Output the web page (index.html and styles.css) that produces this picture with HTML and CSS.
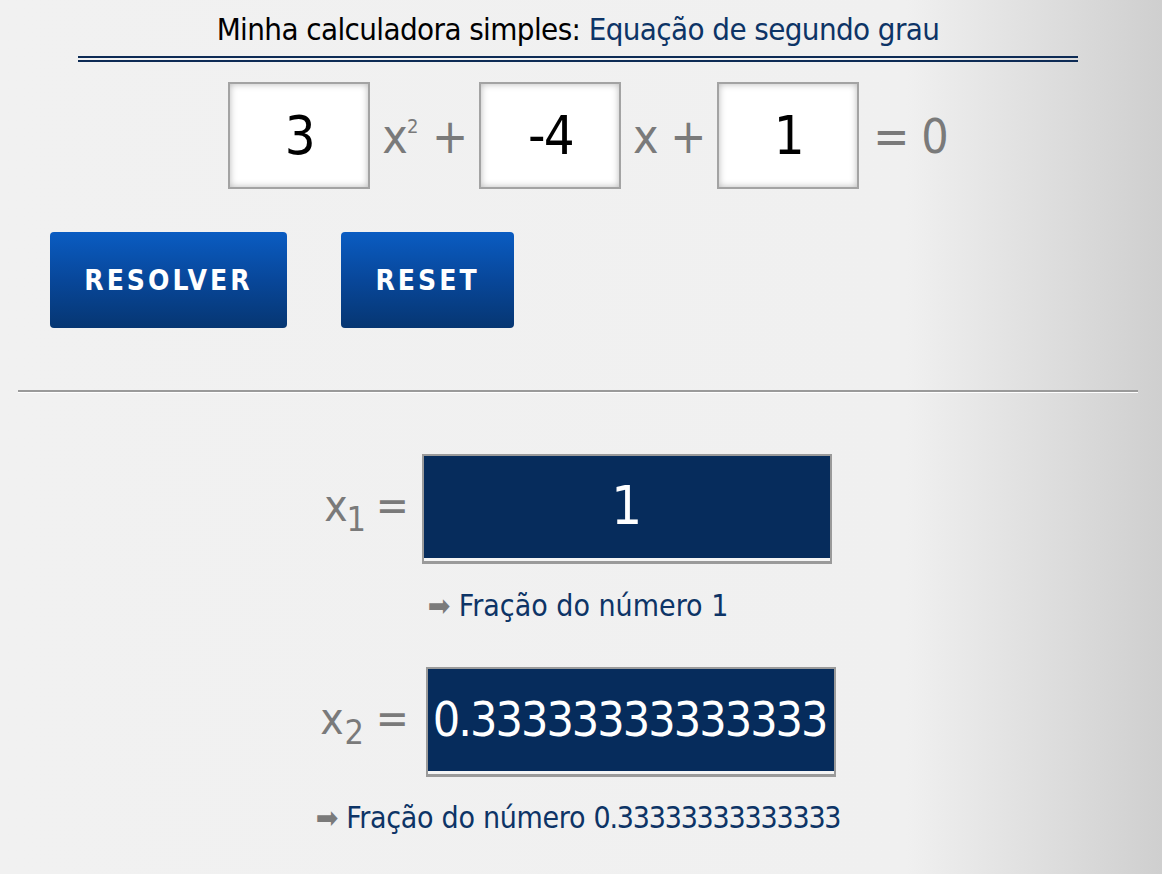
FILE: index.html
```html
<!DOCTYPE html>
<html>
<head>
<meta charset="utf-8">
<link rel="stylesheet" href="styles.css">
</head>
<body>

<div class="calc">
    <h1 class="title">Minha calculadora simples: <span class="title-sub">Equação de segundo grau</span></h1>

    <div class="equation">
        <input type="text" class="coef" id="coefA" value="3">
        <span class="term term-x2">x<sup>2</sup> +</span>
        <input type="text" class="coef" id="coefB" value="-4">
        <span class="term term-x">x +</span>
        <input type="text" class="coef" id="coefC" value="1">
        <span class="term term-eq">= 0</span>
    </div>

    <div class="actions">
        <button class="btn btn-solve">RESOLVER</button>
        <button class="btn btn-reset">RESET</button>
    </div>

    <hr class="divider">

    <div class="result-row">
        <span class="result-label">x<sub>1</sub> =</span>
        <div class="result-box">1</div>
    </div>
    <p class="fraction"><span class="arrow">&#10145;</span> Fração do número 1</p>

    <div class="result-row result-row-2">
        <span class="result-label">x<sub>2</sub> =</span>
        <div class="result-box result-long">0.33333333333333</div>
    </div>
    <p class="fraction fraction-2"><span class="arrow">&#10145;</span> Fração do número <span class="num">0.33333333333333</span></p>
</div>

</body>
</html>
```

FILE: styles.css
```css
body {
    margin: 0;
    min-height: 874px;
    background: linear-gradient(to right, #f1f1f1 0%, #f0f0f0 78%, #cfcfcf 100%);
    font-family: "DejaVu Sans Condensed", "Liberation Sans", sans-serif;
    color: #777;
}

.calc {
    width: 1156px;
    padding-top: 12px;
}

.title {
    width: 1000px;
    margin: 0 auto;
    padding-bottom: 10px;
    border-bottom: 6px double #0d2b55;
    text-align: center;
    font-size: 31px;
    font-weight: normal;
    letter-spacing: -0.6px;
    color: #000;
    line-height: 34px;
}

.title-sub {
    color: #0d3466;
}

.equation {
    display: flex;
    align-items: center;
    justify-content: center;
    margin-top: 20px;
    padding-left: 20px;
}

.coef {
    width: 142px;
    height: 107px;
    box-sizing: border-box;
    border: 2px solid #a3a3a3;
    background: #fff;
    box-shadow: inset 0 0 7px rgba(0, 0, 0, 0.28);
    font-family: inherit;
    font-size: 54px;
    letter-spacing: -2px;
    color: #000;
    text-align: center;
    outline: none;
}

.term {
    font-size: 48px;
    letter-spacing: -1px;
    color: #7a7a7a;
    text-align: center;
    white-space: nowrap;
}

.term sup {
    font-size: 20px;
    vertical-align: 20px;
    margin-right: 2px;
}

.term-x2 {
    width: 109px;
}

.term-x {
    width: 96px;
}

.term-eq {
    padding-left: 14px;
}

.actions {
    display: flex;
    gap: 54px;
    margin: 43px 0 0 50px;
}

.btn {
    height: 96px;
    border: none;
    border-radius: 4px;
    background: linear-gradient(to bottom, #0a5cc2 0%, #08479a 50%, #063672 100%);
    color: #fff;
    font-family: inherit;
    font-size: 28px;
    font-weight: bold;
    letter-spacing: 3px;
    cursor: pointer;
}

.btn-solve {
    width: 237px;
}

.btn-reset {
    width: 173px;
}

.divider {
    margin: 62px 0 0 18px;
    width: 1120px;
    height: 2px;
    border: none;
    background: #9a9a9a;
    box-shadow: 0 1px 0 #fff;
}

.result-row {
    display: flex;
    align-items: center;
    justify-content: center;
    margin-top: 62px;
}

.result-label {
    font-size: 44px;
    letter-spacing: -1px;
    color: #7a7a7a;
    margin-right: 14px;
    white-space: nowrap;
}

.result-label sub {
    font-size: 34px;
    vertical-align: -10px;
    letter-spacing: -2px;
}

.result-box {
    width: 410px;
    height: 110px;
    box-sizing: border-box;
    background: #062c5c;
    border: 2px solid #9a9a9a;
    border-bottom-width: 3px;
    box-shadow: inset 0 -3px 0 #f4f4f4;
    color: #fff;
    font-size: 54px;
    line-height: 100px;
    text-align: center;
    overflow: hidden;
    white-space: nowrap;
}

.result-long {
    font-size: 48px;
    letter-spacing: -2px;
    text-align: left;
    padding-left: 5px;
}

.result-row-2 {
    margin-top: 44px;
}

.result-row-2 .result-label {
    letter-spacing: 1px;
    margin-right: 16px;
}

.fraction {
    margin: 24px 0 0;
    text-align: center;
    font-size: 30px;
    color: #0d3466;
}

.fraction-2 {
    margin-top: 23px;
    letter-spacing: -0.3px;
}

.fraction-2 .num {
    letter-spacing: -1.2px;
}

.arrow {
    color: #7a7a7a;
    font-size: 30px;
}
```
